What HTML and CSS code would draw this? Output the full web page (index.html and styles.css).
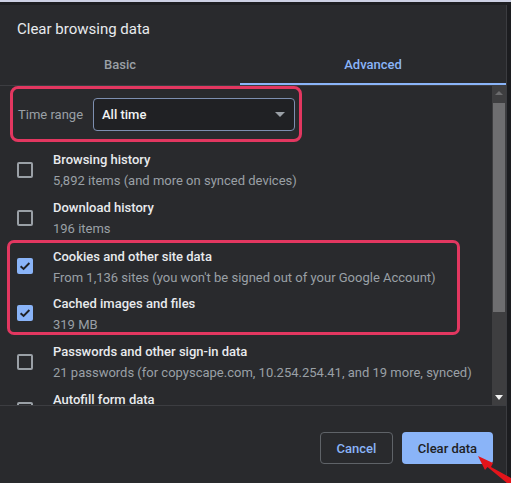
FILE: index.html
```html
<!DOCTYPE html>
<html>
<head>
<meta charset="utf-8">
<link rel="stylesheet" href="styles.css">
</head>
<body>
<div class="window">
  <div class="topstrip"></div>
  <div class="dialog">
    <h1 class="title">Clear browsing data</h1>
    <div class="tabs">
      <div class="tab">Basic</div>
      <div class="tab active">Advanced</div>
    </div>
    <div class="body">
      <div class="list">
        <div class="timerange">
          <span class="tr-label">Time range</span>
          <div class="select"><span>All time</span><span class="caret"></span></div>
        </div>
        <div class="row">
          <span class="cb"></span>
          <div class="txt"><div class="t1">Browsing history</div><div class="t2">5,892 items (and more on synced devices)</div></div>
        </div>
        <div class="row">
          <span class="cb"></span>
          <div class="txt"><div class="t1">Download history</div><div class="t2">196 items</div></div>
        </div>
        <div class="group">
          <div class="row first">
            <span class="cb checked"><svg viewBox="0 0 16 16" width="16" height="16"><path d="M3.6 8.2 L6.6 11 L12.4 5" fill="none" stroke="#202124" stroke-width="1.9"/></svg></span>
            <div class="txt"><div class="t1">Cookies and other site data</div><div class="t2">From 1,136 sites (you won't be signed out of your Google Account)</div></div>
          </div>
          <div class="row second">
            <span class="cb checked"><svg viewBox="0 0 16 16" width="16" height="16"><path d="M3.6 8.2 L6.6 11 L12.4 5" fill="none" stroke="#202124" stroke-width="1.9"/></svg></span>
            <div class="txt"><div class="t1">Cached images and files</div><div class="t2">319 MB</div></div>
          </div>
        </div>
        <div class="row">
          <span class="cb"></span>
          <div class="txt"><div class="t1">Passwords and other sign-in data</div><div class="t2">21 passwords (for copyscape.com, 10.254.254.41, and 19 more, synced)</div></div>
        </div>
        <div class="row">
          <span class="cb"></span>
          <div class="txt"><div class="t1">Autofill form data</div><div class="t2">&nbsp;</div></div>
        </div>
      </div>
      <div class="scrollbar">
        <span class="arr up"></span>
        <div class="track"><div class="thumb"></div></div>
        <span class="arr down"></span>
      </div>
    </div>
    <div class="footer">
      <button class="btn cancel">Cancel</button>
      <button class="btn primary">Clear data</button>
    </div>
  </div>
  <svg class="pointer" width="34" height="28" viewBox="0 0 34 28">
    <path d="M34 23 L14 12 L16 8 L1 1 L8 15 L10.5 12 L30 28 L34 28 Z" fill="#e3141b"/>
  </svg>
</div>
</body>
</html>
```
FILE: styles.css
```css
* { box-sizing: border-box; }
html, body { margin: 0; padding: 0; }
body {
  width: 511px;
  height: 483px;
  overflow: hidden;
  background: #1c1d20;
  font-family: Roboto, "Liberation Sans", sans-serif;
}
.window {
  position: relative;
  width: 511px;
  height: 483px;
  display: flex;
  flex-direction: column;
}
.topstrip {
  height: 5px;
  background: #1e1f22;
  border-top: 2px solid #cdd1e4;
}
.dialog {
  width: 507px;
  flex: 1;
  background: #292a2d;
  border-right: 1px solid #3b3c40;
  display: flex;
  flex-direction: column;
}
.title {
  margin: 0;
  height: 44px;
  padding: 15px 0 0 17px;
  font-size: 15px;
  font-weight: 400;
  color: #e8eaed;
  line-height: 18px;
}
.tabs {
  display: flex;
  height: 37px;
  border-bottom: 1px solid #3c3d41;
}
.tab {
  font-size: 13px;
  font-weight: 500;
  color: #9aa0a6;
  display: flex;
  align-items: center;
  justify-content: center;
  padding-bottom: 3px;
  width: 240px;
  border-bottom: 2px solid transparent;
}
.tab.active {
  flex: 1;
  color: #8ab4f8;
  border-bottom-color: #8ab4f8;
}
.body {
  height: 320px;
  display: flex;
  border-bottom: 1px solid #3c3d41;
  overflow: hidden;
}
.list {
  flex: 1;
  overflow: hidden;
}
.timerange {
  margin: 0 0 4px 10px;
  width: 292px;
  height: 56px;
  border: 3px solid #e23760;
  border-radius: 8px;
  display: flex;
  align-items: center;
  padding: 0 4px 0 5px;
}
.tr-label {
  font-size: 13px;
  color: #9aa0a6;
  width: 75px;
}
.select {
  flex: 1;
  height: 33px;
  border: 1px solid #7d8fb0;
  border-radius: 4px;
  background: #202124;
  display: flex;
  align-items: center;
  justify-content: space-between;
  padding: 0 9px 0 8px;
  font-size: 13px;
  font-weight: 500;
  color: #f1f3f4;
}
.caret {
  width: 0;
  height: 0;
  border-left: 5px solid transparent;
  border-right: 5px solid transparent;
  border-top: 5px solid #9aa0a6;
}
.row {
  height: 48px;
  display: flex;
  align-items: center;
  padding-left: 17px;
}
.cb {
  width: 16px;
  height: 16px;
  border: 2px solid #9aa0a6;
  border-radius: 2px;
  flex: none;
  margin-right: 20px;
}
.cb.checked {
  background: #8ab4f8;
  border: none;
}
.cb svg { display: block; }
.txt { line-height: 21px; }
.t1 {
  font-size: 13px;
  font-weight: 500;
  color: #e8eaed;
}
.t2 {
  font-size: 13px;
  color: #9aa0a6;
  white-space: nowrap;
}
.group {
  margin: -2px 0 3px 7px;
  width: 453px;
  height: 95px;
  border: 3px solid #e23760;
  border-radius: 7px;
}
.group .row {
  padding-left: 7px;
  align-items: flex-start;
}
.group .row .cb { margin-top: 12px; }
.group .row.first { height: 45px; padding-top: 3px; }
.group .row.second { height: 44px; padding-top: 5px; }
.scrollbar {
  width: 14px;
  background: #3e3e40;
  display: flex;
  flex-direction: column;
  align-items: center;
}
.track {
  flex: 1;
  width: 12px;
  padding: 3px 0 78px 0;
}
.thumb {
  height: 100%;
  background: #6e6e70;
}
.arr {
  width: 0;
  height: 0;
  border-left: 4px solid transparent;
  border-right: 4px solid transparent;
  margin: 5px 0;
}
.arr.up { border-bottom: 4px solid #6b6b6d; }
.arr.down { border-top: 5px solid #f2f2f2; }
.footer {
  flex: 1;
  display: flex;
  justify-content: flex-end;
  align-items: flex-start;
  padding: 26px 13px 0 0;
  gap: 9px;
}
.btn {
  height: 32px;
  border-radius: 4px;
  font-family: Roboto, "Liberation Sans", sans-serif;
  font-size: 13px;
  font-weight: 500;
  cursor: pointer;
}
.cancel {
  width: 73px;
  background: transparent;
  border: 1px solid #5f6368;
  color: #8ab4f8;
}
.primary {
  width: 91px;
  background: #8ab4f8;
  border: none;
  color: #202124;
}
.pointer {
  position: absolute;
  right: 0;
  bottom: 0;
}
```
